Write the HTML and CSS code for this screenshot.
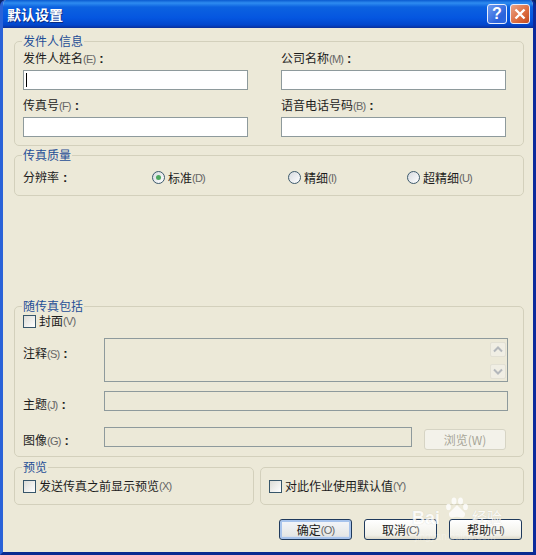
FILE: index.html
```html
<!DOCTYPE html>
<html lang="zh-CN">
<head>
    <meta charset="UTF-8">
    <title>默认设置</title>
    <link rel="stylesheet" href="styles.css">
</head>
<body>

    <div class="window">
        <!-- Title bar -->
        <div class="titlebar">
            <span class="title">默认设置</span>
            <div class="caption-btns">
                <span class="caption-btn help">?</span>
                <span class="caption-btn close">
                    <svg width="12" height="12" viewBox="0 0 12 12"><path d="M1.5 1.5L10.5 10.5M10.5 1.5L1.5 10.5" stroke="#fff" stroke-width="2.4" fill="none"/></svg>
                </span>
            </div>
        </div>

        <div class="content">
            <!-- Sender info -->
            <fieldset class="group sender">
                <legend>发件人信息</legend>
                <div class="sender-grid">
                    <div class="field">
                        <label>发件人姓名<span class="key">(E)</span><b class="colon">:</b></label>
                        <div class="input"><i class="caret"></i></div>
                    </div>
                    <div class="field">
                        <label>公司名称<span class="key">(M)</span><b class="colon">:</b></label>
                        <div class="input"></div>
                    </div>
                    <div class="field">
                        <label>传真号<span class="key">(F)</span><b class="colon">:</b></label>
                        <div class="input"></div>
                    </div>
                    <div class="field">
                        <label>语音电话号码<span class="key">(B)</span><b class="colon">:</b></label>
                        <div class="input"></div>
                    </div>
                </div>
            </fieldset>

            <!-- Fax quality -->
            <fieldset class="group quality">
                <legend>传真质量</legend>
                <div class="quality-row">
                    <span>分辨率<b class="colon">:</b></span>
                    <span class="option"><i class="radio checked"></i>标准<span class="key">(D)</span></span>
                    <span class="option"><i class="radio"></i>精细<span class="key">(I)</span></span>
                    <span class="option"><i class="radio"></i>超精细<span class="key">(U)</span></span>
                </div>
            </fieldset>

            <!-- Included with fax -->
            <fieldset class="group include">
                <legend>随传真包括</legend>
                <div class="option cover"><i class="check"></i>封面<span class="key">(V)</span></div>
                <div class="inc-row note-row">
                    <span class="inc-label">注释<span class="key">(S)</span><b class="colon">:</b></span>
                    <div class="box note">
                        <div class="scroll">
                            <span class="arrow">
                                <svg width="10" height="7" viewBox="0 0 10 7"><path d="M1 5.500L5 1.500L9 5.500" stroke="#b4b8bc" stroke-width="2" fill="none"/></svg>
                            </span>
                            <span class="arrow">
                                <svg width="10" height="7" viewBox="0 0 10 7"><path d="M1 1.500L5 5.500L9 1.500" stroke="#b4b8bc" stroke-width="2" fill="none"/></svg>
                            </span>
                        </div>
                    </div>
                </div>
                <div class="inc-row subject-row">
                    <span class="inc-label">主题<span class="key">(J)</span><b class="colon">:</b></span>
                    <div class="box subject"></div>
                </div>
                <div class="inc-row image-row">
                    <span class="inc-label">图像<span class="key">(G)</span><b class="colon">:</b></span>
                    <div class="box image"></div>
                    <span class="browse">浏览(W)</span>
                </div>
            </fieldset>

            <!-- Preview -->
            <div class="preview-row">
                <fieldset class="group preview">
                    <legend>预览</legend>
                    <div class="option"><i class="check"></i>发送传真之前显示预览<span class="key">(X)</span></div>
                </fieldset>
                <fieldset class="group defaults">
                    <div class="option"><i class="check"></i>对此作业使用默认值<span class="key">(Y)</span></div>
                </fieldset>
            </div>

            <!-- Dialog buttons -->
            <div class="buttons">
                <span class="btn primary">确定<span class="key">(O)</span></span>
                <span class="btn">取消<span class="key">(C)</span></span>
                <span class="btn">帮助<span class="key">(H)</span></span>
            </div>
        </div>

        <!-- Watermark over the dialog -->
        <div class="watermark">
            <svg class="paw" width="24" height="22" viewBox="0 0 24 22" fill="#fff">
                <ellipse cx="3.500" cy="10" rx="2.400" ry="3.200"/>
                <ellipse cx="9" cy="4" rx="2.500" ry="3.500"/>
                <ellipse cx="15.500" cy="4" rx="2.500" ry="3.500"/>
                <ellipse cx="20.500" cy="10" rx="2.400" ry="3.200"/>
                <path d="M12 8L20 16Q20.500 21 16 20.500Q12 19 8 20.500Q3.500 21 4 16Z"/>
            </svg>
            <span class="wm-bai">Bai</span>
            <span class="wm-jy">经验</span>
            <span class="wm-url">jingyan.baidu.com</span>
        </div>
    </div>

</body>
</html>
```

FILE: styles.css
```css
* {
    box-sizing: border-box;
}

body {
    margin: 0;
    font-family: "Noto Sans CJK SC", "Liberation Sans", sans-serif;
    font-size: 12px;
    line-height: 14px;
    color: #1c1c1c;
    background-color: #0a246a;
}

.window {
    position: relative;
    width: 536px;
    height: 555px;
    display: flex;
    flex-direction: column;
    overflow: hidden;
    background-color: #ece9d8;
    border-left: 3px solid #2a62d8;
    border-right: 3px solid #0b2a9c;
    border-bottom: 3px solid #0a2a90;
    border-radius: 6px 6px 0 0;
}

/* title bar */
.titlebar {
    height: 28px;
    margin: 0 -3px;
    padding: 0 6px 0 7px;
    display: flex;
    justify-content: space-between;
    align-items: center;
    background: linear-gradient(to bottom, #0a5ad0 0, #2e8cf0 3px, #0c62e0 7px, #0556e0 18px, #0246cc 25px, #0a2f9a 28px);
}

.title {
    color: #fff;
    font-size: 14px;
    font-weight: 700;
    text-shadow: 1px 1px 0 #0a2a80;
}

.caption-btns {
    display: flex;
    gap: 3px;
}

.caption-btn {
    width: 20px;
    height: 20px;
    display: flex;
    justify-content: center;
    align-items: center;
    border: 1px solid #e8eefc;
    border-radius: 3px;
    color: #fff;
}

.help {
    font-family: "Liberation Sans", sans-serif;
    font-size: 16px;
    font-weight: 700;
    background: linear-gradient(135deg, #6f9cf0, #2a62dc 70%, #2f6be0);
}

.close {
    background: linear-gradient(135deg, #eaa488, #dc6a3c 60%, #c04a20);
}

/* groups */
.content {
    flex: 1;
    padding: 6px 9px 0 11px;
    display: flex;
    flex-direction: column;
}

.group {
    margin: 0;
    padding: 0 8px;
    min-width: 0;
    border: 1px solid #d3d0bc;
    border-radius: 5px;
}

.group legend {
    margin-left: -1px;
    padding: 0 1px;
    line-height: 14px;
    color: #1f4e96;
}

.sender {
    height: 112px;
}

.sender-grid {
    display: grid;
    grid-template-columns: 225px 225px;
    column-gap: 33px;
    row-gap: 8px;
    padding-top: 3px;
}

.field label {
    display: block;
    height: 14px;
    margin-bottom: 5px;
}

.input {
    height: 20px;
    padding: 2px;
    background: #fff;
    border: 1px solid #8e9a9c;
}

.caret {
    display: block;
    width: 1px;
    height: 14px;
    background: #000;
}

.key {
    font-family: "Liberation Sans", sans-serif;
    font-size: 11px;
    color: #666;
    letter-spacing: -0.8px;
}

.colon {
    margin-left: 4px;
    font-family: "Liberation Sans", sans-serif;
    font-size: 13px;
}

.quality {
    height: 48px;
    margin-top: 2px;
}

.quality-row {
    display: grid;
    grid-template-columns: 129px 136px 119px 1fr;
    align-items: center;
    padding-top: 8px;
}

.option {
    display: flex;
    align-items: center;
}

.radio {
    width: 13px;
    height: 13px;
    margin-right: 3px;
    display: flex;
    justify-content: center;
    align-items: center;
    background: linear-gradient(135deg, #d6dadf, #fff);
    border: 1px solid #3d5a6c;
    border-radius: 50%;
}

.radio.checked::after {
    content: "";
    width: 5px;
    height: 5px;
    border-radius: 50%;
    background: #4da860;
}

.check {
    width: 13px;
    height: 13px;
    margin-right: 3px;
    background: linear-gradient(135deg, #dcdcd6, #fff);
    border: 1px solid #37566a;
}

.include {
    height: 158px;
    margin-top: 103px;
}

.cover {
    padding-top: 1px;
}

.inc-row {
    display: flex;
    align-items: flex-start;
}

.inc-label {
    width: 81px;
    flex: none;
}

.box {
    border: 1px solid #8e9a9c;
}

.note-row {
    margin-top: 10px;
}

.note-row .inc-label {
    padding-top: 8px;
}

.note {
    width: 404px;
    height: 44px;
    display: flex;
    justify-content: flex-end;
}

.scroll {
    width: 17px;
    padding-top: 3px;
    display: flex;
    flex-direction: column;
    justify-content: space-between;
    padding-bottom: 2px;
}

.arrow {
    width: 16px;
    height: 15px;
    display: flex;
    justify-content: center;
    align-items: center;
    background: #f0eee4;
    border: 1px solid #e2e0d4;
    border-radius: 2px;
}

.subject-row {
    margin-top: 9px;
}

.subject-row .inc-label {
    padding-top: 6px;
}

.subject {
    width: 404px;
    height: 20px;
}

.image-row {
    margin-top: 15px;
}

.image-row .inc-label {
    padding-top: 6px;
}

.image {
    width: 308px;
    height: 20px;
}

.browse {
    width: 82px;
    height: 21px;
    margin: 2px 0 0 12px;
    display: flex;
    justify-content: center;
    align-items: center;
    color: #a8a698;
    background: #f3f2ea;
    border: 1px solid #d6d4c4;
    border-radius: 3px;
}

.preview-row {
    display: flex;
    align-items: flex-start;
    gap: 6px;
    margin-top: 3px;
}

.preview {
    width: 240px;
    height: 45px;
}

.preview .option {
    padding-top: 5px;
}

.defaults {
    width: 264px;
    height: 38px;
    margin-top: 7px;
    display: flex;
    align-items: center;
}

.buttons {
    display: flex;
    gap: 12px;
    margin-top: 14px;
    padding-left: 265px;
}

.btn {
    width: 73px;
    height: 21px;
    display: flex;
    justify-content: center;
    align-items: center;
    background: linear-gradient(to bottom, #fff, #f1f0e8 80%, #dcd8c8);
    border: 1px solid #1f3a5c;
    border-radius: 3px;
}

.btn.primary {
    background: linear-gradient(to bottom, #f4f6fb, #e6e8e6 80%, #c8d4ec);
    box-shadow: inset 0 0 0 2px #a8c4ec;
}

/* watermark */
.watermark {
    position: absolute;
    left: 0;
    top: 0;
    width: 100%;
    height: 100%;
    pointer-events: none;
    color: #fff;
    font-family: "Liberation Sans", sans-serif;
}

.paw {
    position: absolute;
    left: 442px;
    top: 497px;
    opacity: 0.8;
}

.wm-bai {
    position: absolute;
    left: 409px;
    top: 508px;
    font-size: 18px;
    line-height: 20px;
    font-weight: 700;
    opacity: 0.8;
    text-shadow: 0 0 1px #c8c6b8;
}

.wm-jy {
    position: absolute;
    left: 469px;
    top: 508px;
    font-family: "Noto Sans CJK SC", sans-serif;
    font-size: 15px;
    line-height: 18px;
    opacity: 0.8;
    text-shadow: 0 0 1px #c8c6b8;
}

.wm-url {
    position: absolute;
    left: 412px;
    top: 531px;
    font-size: 10px;
    line-height: 12px;
    opacity: 0.3;
}
```
